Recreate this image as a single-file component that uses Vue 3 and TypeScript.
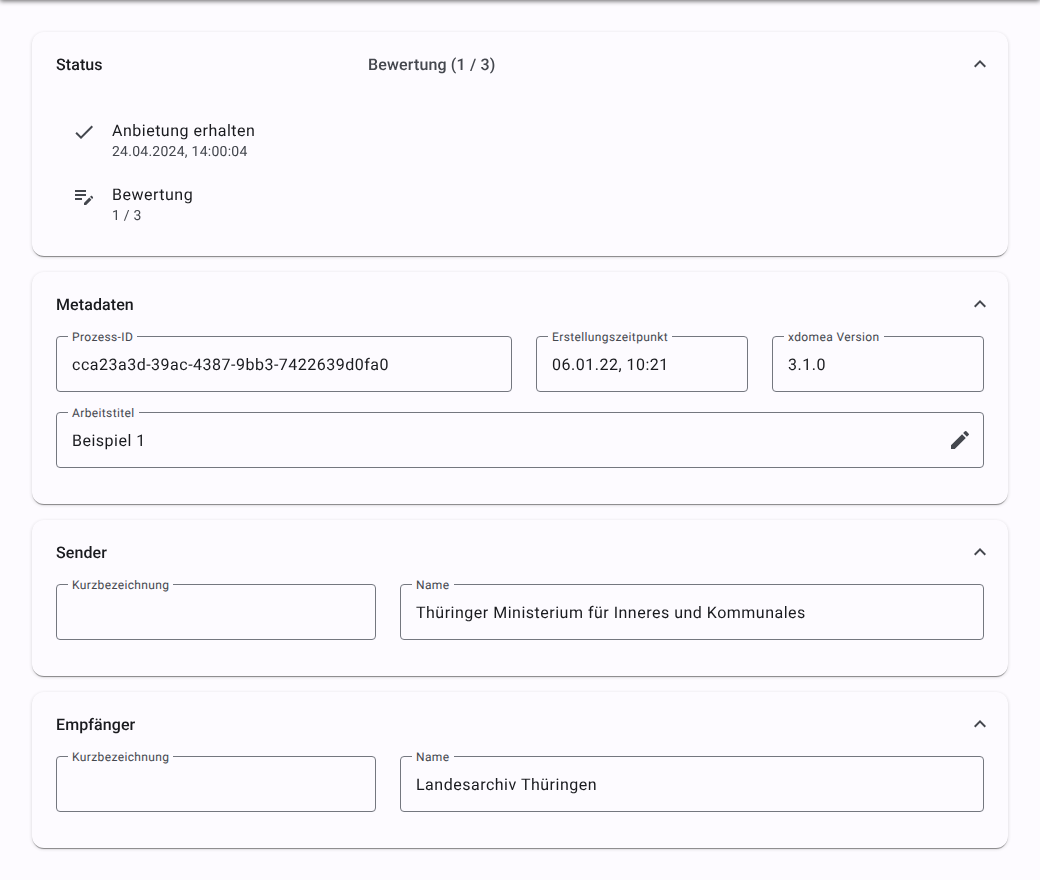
<script setup lang="ts">
interface Field {
  label: string
  value: string
  editable?: boolean
}

const metadata: Field[] = [
  { label: 'Prozess-ID', value: 'cca23a3d-39ac-4387-9bb3-7422639d0fa0' },
  { label: 'Erstellungszeitpunkt', value: '06.01.22, 10:21' },
  { label: 'xdomea Version', value: '3.1.0' },
]
const title: Field = { label: 'Arbeitstitel', value: 'Beispiel 1', editable: true }

const parties: { heading: string; fields: Field[] }[] = [
  {
    heading: 'Sender',
    fields: [
      { label: 'Kurzbezeichnung', value: '' },
      { label: 'Name', value: 'Thüringer Ministerium für Inneres und Kommunales' },
    ],
  },
  {
    heading: 'Empfänger',
    fields: [
      { label: 'Kurzbezeichnung', value: '' },
      { label: 'Name', value: 'Landesarchiv Thüringen' },
    ],
  },
]
const chevron = 'M12 8l-6 6 1.41 1.41L12 10.83l4.59 4.58L18 14z'
</script>

<template>
  <div class="page">
    <header class="toolbar"></header>
    <main class="content">
      <section class="card">
        <div class="head">
          <h2 class="title status-title">Status</h2>
          <span class="desc">Bewertung (1 / 3)</span>
          <svg class="chev" viewBox="0 0 24 24"><path :d="chevron" /></svg>
        </div>
        <ul class="steps">
          <li class="step">
            <svg class="icon" viewBox="0 0 24 24"><path d="M9 16.17 4.83 12l-1.42 1.41L9 19 21 7l-1.41-1.41z" /></svg>
            <div class="step-text">
              <div class="primary">Anbietung erhalten</div>
              <div class="secondary">24.04.2024, 14:00:04</div>
            </div>
          </li>
          <li class="step">
            <svg class="icon" viewBox="0 0 24 24"><path d="M3 10h11v2H3v-2zm0-2h11V6H3v2zm0 8h7v-2H3v2zm15.01-3.13.71-.71c.39-.39 1.02-.39 1.41 0l.71.71c.39.39.39 1.02 0 1.41l-.71.71-2.12-2.12zm-.71.71-5.3 5.3V21h2.12l5.3-5.3-2.12-2.12z" /></svg>
            <div class="step-text">
              <div class="primary">Bewertung</div>
              <div class="secondary">1 / 3</div>
            </div>
          </li>
        </ul>
      </section>

      <section class="card">
        <div class="head">
          <h2 class="title">Metadaten</h2>
          <svg class="chev" viewBox="0 0 24 24"><path :d="chevron" /></svg>
        </div>
        <div class="body">
          <div class="row row-meta">
            <div v-for="f in metadata" :key="f.label" class="field">
              <span class="label">{{ f.label }}</span>
              <span class="value">{{ f.value }}</span>
            </div>
          </div>
          <div class="field">
            <span class="label">{{ title.label }}</span>
            <span class="value">{{ title.value }}</span>
            <svg class="icon edit" viewBox="0 0 24 24"><path d="M3 17.25V21h3.75L17.81 9.94l-3.75-3.75zM20.71 7.04a1 1 0 0 0 0-1.41l-2.34-2.34a1 1 0 0 0-1.41 0l-1.83 1.83 3.75 3.75z" /></svg>
          </div>
        </div>
      </section>

      <section v-for="p in parties" :key="p.heading" class="card">
        <div class="head">
          <h2 class="title">{{ p.heading }}</h2>
          <svg class="chev" viewBox="0 0 24 24"><path :d="chevron" /></svg>
        </div>
        <div class="body">
          <div class="row row-party">
            <div v-for="f in p.fields" :key="f.label" class="field">
              <span class="label">{{ f.label }}</span>
              <span class="value">{{ f.value }}</span>
            </div>
          </div>
        </div>
      </section>
    </main>
  </div>
</template>

<style>
html, body {
  background: #fdfbff;
}
</style>

<style scoped>
.page {
  font-family: Roboto, "Liberation Sans", sans-serif;
  color: #1a1b1f;
  background: #fdfbff;
  height: 880px;
  overflow: hidden;
  text-rendering: geometricPrecision;
  -webkit-font-smoothing: antialiased;
}
.toolbar {
  height: 8px;
  margin-top: -8px;
  background: #fdfbff;
  box-shadow: 0 1px 5px rgba(0, 0, 0, .62);
}
.content {
  display: flex;
  flex-direction: column;
  gap: 16px;
  padding: 32px;
  opacity: .999;
}
.card {
  background: #fdfbff;
  border-radius: 12px;
  box-shadow: 0 2px 1px -1px rgba(0, 0, 0, .34), 0 1px 1px rgba(0, 0, 0, .14), 0 1px 4px rgba(0, 0, 0, .14);
}
.head {
  display: flex;
  align-items: center;
  height: 64px;
  padding: 0 16px 0 24px;
}
.title {
  margin: 0;
  font-size: 16px;
  line-height: normal;
  font-weight: 500;
  letter-spacing: .1px;
  color: #1a1b1f;
  flex: 1;
}
.status-title {
  flex: 0 0 312px;
}
.desc {
  flex: 1;
  font-size: 16px;
  font-weight: 500;
  letter-spacing: .15px;
  color: #44474e;
}
.chev {
  width: 24px;
  height: 24px;
  fill: #44474e;
}
.steps {
  list-style: none;
  margin: 0;
  padding: 12px 24px 20px;
}
.step {
  display: flex;
  align-items: flex-start;
  gap: 16px;
  height: 64px;
  padding-left: 16px;
}
.step .icon {
  margin-top: 12px;
}
.step-text {
  margin-top: 11px;
}
.icon {
  flex: none;
  width: 24px;
  height: 24px;
  fill: #44474e;
}
.primary {
  font-size: 16px;
  line-height: 24px;
  letter-spacing: .5px;
  color: #1a1b1f;
}
.secondary {
  margin-top: 1px;
  font-size: 14px;
  line-height: 16px;
  letter-spacing: .25px;
  color: #44474e;
}
.body {
  display: flex;
  flex-direction: column;
  gap: 20px;
  padding: 0 24px 36px;
}
.row {
  display: grid;
  gap: 24px;
}
.row-meta {
  grid-template-columns: 1fr 212px 212px;
}
.row-party {
  grid-template-columns: 320px 1fr;
}
.field {
  position: relative;
  display: flex;
  align-items: center;
  justify-content: space-between;
  height: 56px;
  box-sizing: border-box;
  padding: 0 11px 0 15px;
  border: 1px solid #74777f;
  border-radius: 4px;
}
.label {
  position: absolute;
  top: -8px;
  left: 11px;
  padding: 0 4px;
  font-size: 12px;
  line-height: 16px;
  letter-spacing: .38px;
  color: #44474e;
  background: #fdfbff;
}
.value {
  font-size: 16px;
  line-height: normal;
  letter-spacing: .5px;
  color: #1a1b1f;
}
</style>
